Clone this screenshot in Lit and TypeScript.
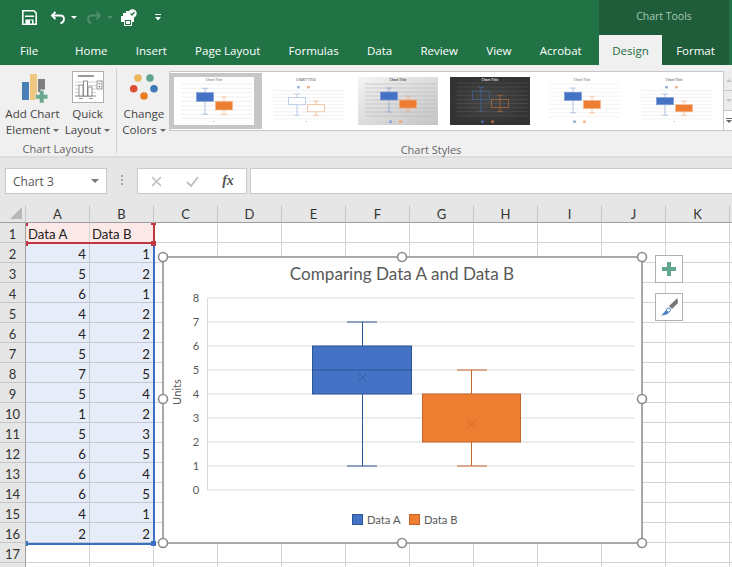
import { LitElement, html, css, svg } from "lit";
import { customElement } from "lit/decorators.js";

const tabs = ["Home", "Insert", "Page Layout", "Formulas", "Data", "Review", "View", "Acrobat"];
const cols = ["A", "B", "C", "D", "E", "F", "G", "H", "I", "J", "K"];
const dataA = [4, 5, 6, 4, 4, 5, 7, 5, 1, 5, 6, 6, 6, 4, 2];
const dataB = [1, 2, 1, 2, 2, 2, 5, 4, 2, 3, 5, 4, 5, 1, 2];

type Thumb = {
  bg: string; fillA: string; fillB: string; lineA: string; lineB: string; grid: string;
  title: string; titleColor: string; legend: "top" | "bottom" | "none"; top: number; st: number;
};

const thumbs: Thumb[] = [
  { bg: "#fff", fillA: "#4472c4", fillB: "#ed7d31", lineA: "#9db2dc", lineB: "#f3b88f", grid: "#e4e4e4", title: "Chart Title", titleColor: "#999", legend: "none", top: 7, st: 4.33 },
  { bg: "#fff", fillA: "#fff", fillB: "#fff", lineA: "#a9bce0", lineB: "#f0b48a", grid: "#e8e8e8", title: "CHART TITLE", titleColor: "#888", legend: "top", top: 13.5, st: 3.55 },
  { bg: "url(#g1)", fillA: "#4472c4", fillB: "#ed7d31", lineA: "#8ba3d2", lineB: "#efa877", grid: "#b8b8b8", title: "Chart Title", titleColor: "#555", legend: "bottom", top: 7, st: 4 },
  { bg: "url(#g2)", fillA: "none", fillB: "none", lineA: "#44679f", lineB: "#b06a3c", grid: "#565656", title: "Chart Title", titleColor: "#ddd", legend: "bottom", top: 6, st: 4.1 },
  { bg: "#fff", fillA: "#4472c4", fillB: "#ed7d31", lineA: "#9db2dc", lineB: "#f3b88f", grid: "#ececec", title: "Chart Title", titleColor: "#999", legend: "bottom", top: 7, st: 4.1 },
  { bg: "#fff", fillA: "#4472c4", fillB: "#ed7d31", lineA: "#9db2dc", lineB: "#f3b88f", grid: "#e8e8e8", title: "Chart Title", titleColor: "#888", legend: "top", top: 13.5, st: 3.55 },
];

function thumbSvg(t: Thumb) {
  const y = (v: number) => t.top + (8 - v) * t.st;
  const lines = [0, 1, 2, 3, 4, 5, 6, 7, 8];
  const legY = t.legend === "top" ? 9 : 43.5;
  return html`<svg class="thumb" viewBox="0 0 80 48" width="80" height="48">
    <defs>
      <linearGradient id="g1" x1="0" y1="0" x2="1" y2="1"><stop offset="0" stop-color="#f4f4f4"/><stop offset="1" stop-color="#c4c4c4"/></linearGradient>
      <radialGradient id="g2"><stop offset="0" stop-color="#474747"/><stop offset="1" stop-color="#333"/></radialGradient>
    </defs>
    <rect width="80" height="48" fill=${t.bg}/>
    <text x="40" y="4" class="tt" fill=${t.titleColor} text-anchor="middle">${t.title}</text>
    ${lines.map((v) => svg`<line x1="7" x2="78" y1=${y(v)} y2=${y(v)} stroke=${t.grid} stroke-width=".6"/>`)}
    ${t.legend !== "none" ? svg`<rect x="31" y=${legY} width="3" height="2.4" fill=${t.lineA}/><rect x="41" y=${legY} width="3" height="2.4" fill=${t.lineB}/>` : ""}
    ${t.legend !== "bottom" ? svg`<rect x="39.500" y="44" width="1" height="1" fill="#aaa"/>` : ""}
    <line x1="31" x2="31" y1=${y(7)} y2=${y(1)} stroke=${t.lineA} stroke-width=".8"/>
    <line x1="28" x2="34" y1=${y(7)} y2=${y(7)} stroke=${t.lineA} stroke-width=".7"/>
    <line x1="28" x2="34" y1=${y(1)} y2=${y(1)} stroke=${t.lineA} stroke-width=".7"/>
    <rect x="22.500" y=${y(6)} width="17" height=${t.st * 2} fill=${t.fillA} stroke=${t.fillA === "#4472c4" ? "#7f9bd2" : t.lineA} stroke-width=".7"/>
    <line x1="50" x2="50" y1=${y(5)} y2=${y(1)} stroke=${t.lineB} stroke-width=".8"/>
    <line x1="47" x2="53" y1=${y(5)} y2=${y(5)} stroke=${t.lineB} stroke-width=".7"/>
    <line x1="47" x2="53" y1=${y(1)} y2=${y(1)} stroke=${t.lineB} stroke-width=".7"/>
    <rect x="41.500" y=${y(4)} width="17" height=${t.st * 2} fill=${t.fillB} stroke=${t.lineB} stroke-width=".7"/>
  </svg>`;
}

@customElement("app-root")
export class AppRoot extends LitElement {
  static styles = css`
    :host { display: block; width: 732px; height: 567px; overflow: hidden; position: relative; background: #fff; font-family: "Open Sans", "Noto Sans", sans-serif; color: #444; }
    .titlebar { height: 35px; background: #217346; display: flex; align-items: center; justify-content: space-between; }
    .qat { display: flex; align-items: center; padding-left: 22px; }
    .qat svg { display: block; }
    .ctx { width: 130px; height: 35px; margin-right: 3px; background: #1e5c3a; color: #a9c9b6; font-size: 10.500px; display: flex; align-items: center; justify-content: center; padding-bottom: 3px; box-sizing: border-box; }
    .tabbar { height: 30px; background: #217346; display: flex; align-items: stretch; font-size: 11.500px; color: #fff; }
    .tab { display: flex; align-items: center; padding: 0 14.150px; white-space: nowrap; }
    .tab.file { box-sizing: border-box; width: 60.850px; padding: 0 0 0 20px; }
    .ctx-tabs { flex: none; margin-left: auto; margin-right: 3px; width: 130px; display: flex; background: #1e5c3a; }
    .ctx-tabs .tab { justify-content: center; padding: 0; }
    .design { width: 63px; background: #f0f0f0; color: #1e6b40; }
    .format { flex: 1; }
    .ribbon { height: 93px; background: #f0f0f0; border-bottom: 2px solid #dcdcdc; box-sizing: border-box; display: flex; position: relative; font-size: 11.600px; color: #444; }
    .grp { display: flex; flex-direction: column; box-sizing: border-box; }
    .grp.layouts { width: 117px; border-right: 1px solid #cfcfcf; margin: 4px 0 0; height: 84px; }
    .grp.colors { width: 54px; }
    .grp.styles { flex: 1; }
    .items { display: flex; flex: 1; }
    .big { display: flex; flex-direction: column; align-items: center; line-height: 16px; text-align: center; white-space: nowrap; }
    .big svg { display: block; }
    .add { width: 65px; margin-top: -1px; }
    .quick { width: 45px; margin-top: -1px; }
    .big .lbl { margin-top: 2px; }
    .changecolors { width: 54px; margin-top: 5px; }
    .changecolors .lbl { margin-top: 6px; }
    .quicksvg { margin: 3px 0 1px; }
    .car { display: inline-block; width: 0; height: 0; border-left: 3px solid transparent; border-right: 3px solid transparent; border-top: 3px solid #666; vertical-align: middle; margin-left: 3px; }
    .glabel { font-size: 11px; color: #666; text-align: center; height: 15px; line-height: 15px; }
    .layouts .glabel { margin-bottom: -3px; }
    .styles .glabel { margin-top: auto; margin-bottom: -1px; width: 520px; }
    .gallery { margin-top: 6px; height: 60px; width: 563px; margin-left: -2px; border: 1px solid #c6c6c6; border-width: 1px 0 1px 1px; background: #fff; display: flex; box-sizing: border-box; align-items: center; position: relative; }
    .sel { background: #c6c6c6; padding: 4px; height: 56px; width: 92px; box-sizing: border-box; flex: none; }
    .gthumb { flex: none; margin-left: 12px; height: 48px; }
    .sel + .gthumb { margin-left: 4px; }
    .thumb { display: block; }
    .tt { font-family: "Open Sans", sans-serif; font-size: 3.200px; font-weight: 700; }
    .scroll { position: absolute; left: 553px; top: -1px; width: 9px; height: 60px; display: flex; flex-direction: column; border-left: 1px solid #c6c6c6; background: #ececec; }
    .scroll div { flex: 1; border-bottom: 1px solid #c6c6c6; position: relative; display: flex; align-items: center; justify-content: center; }
    .scroll div:last-child { background: #fff; }
    .up { width: 0; height: 0; border-left: 3px solid transparent; border-right: 3px solid transparent; border-bottom: 3px solid #c4c4c4; }
    .dn { width: 0; height: 0; border-left: 3px solid transparent; border-right: 3px solid transparent; border-top: 3px solid #c4c4c4; }
    .more { width: 6px; border-top: 1px solid #666; display: flex; justify-content: center; padding-top: 1px; }
    .more span { width: 0; height: 0; border-left: 3px solid transparent; border-right: 3px solid transparent; border-top: 3px solid #666; }
    .fbar { height: 47px; background: #e6e6e6; box-sizing: border-box; padding: 10px 0 0 5px; display: flex; align-items: flex-start; }
    .namebox { width: 102px; height: 26px; background: #fff; border: 1px solid #c9c9c9; box-sizing: border-box; display: flex; align-items: center; justify-content: space-between; padding: 0 7px; font-size: 12px; color: #555; }
    .namebox .arrow { width: 0; height: 0; border-left: 4px solid transparent; border-right: 4px solid transparent; border-top: 4px solid #777; }
    .dots { width: 30px; display: flex; flex-direction: column; align-items: center; gap: 2px; padding-top: 7px; box-sizing: border-box; height: 26px; }
    .dots i { display: block; width: 2px; height: 2px; background: #aaa; }
    .fnbtns { width: 110px; height: 26px; background: #fff; border: 1px solid #c9c9c9; box-sizing: border-box; display: flex; align-items: center; }
    .fnbtns span { width: 36px; display: flex; justify-content: center; align-items: center; }
    .fnbtns .fx { color: #555; font-family: "Liberation Serif", serif; font-style: italic; font-size: 14px; font-weight: 700; }
    .fbox { flex: 1; height: 26px; margin-left: 3px; background: #fff; border: 1px solid #c9c9c9; border-right: 0; box-sizing: border-box; }
    .sheet { display: grid; grid-template-columns: 26px repeat(11, 64px) 66px; grid-template-rows: 18px; grid-auto-rows: 20px; font-family: Lato, "Liberation Sans", sans-serif; font-size: 13.200px; color: #222; }
    .hd { background: #e6e6e6; border-right: 1px solid #c6c6c6; border-bottom: 1px solid #9e9e9e; box-sizing: border-box; display: flex; align-items: center; justify-content: center; color: #333; font-size: 13px; }
    .corner { position: relative; }
    .corner::after { content: ""; position: absolute; right: 3px; bottom: 3px; border-style: solid; border-width: 0 0 12px 12px; border-color: transparent transparent #b8b8b8 transparent; }
    .rh { background: #e6e6e6; border-right: 1px solid #9e9e9e; border-bottom: 1px solid #c6c6c6; box-sizing: border-box; display: flex; align-items: center; justify-content: center; color: #333; font-size: 13px; padding-top: 2px; }
    .c { border-right: 1px solid #d4d4d4; border-bottom: 1px solid #d4d4d4; box-sizing: border-box; display: flex; align-items: center; padding: 2px 2px 0; }
    .num { justify-content: flex-end; padding-right: 3px; }
    .red { background: #fbe9e7; }
    .blue { background: #e6edf8; border-color: #c2c8d2; }
    .frame-red, .frame-blue { position: absolute; box-sizing: border-box; pointer-events: none; }
    .frame-red { left: 26px; top: 223px; width: 129px; height: 21px; border-right: 2px solid #c0353f; border-bottom: 2px solid #c0353f; }
    .frame-blue { left: 26px; top: 244px; width: 129px; height: 301px; border-right: 2px solid #3a6fc4; border-bottom: 2px solid #3a6fc4; }
    .hnd { position: absolute; width: 5px; height: 5px; }
    .hr { background: #c0353f; }
    .hb { background: #3a6fc4; }
    .h1 { left: 26px; top: 223px; width: 2px; height: 3px; }
    .h2 { left: 26px; top: 241px; width: 2px; height: 5px; }
    .h3 { left: 151px; top: 223px; height: 2px; }
    .h4 { left: 151px; top: 241px; }
    .h5 { left: 26px; top: 541px; width: 2px; }
    .h6 { left: 151px; top: 541px; }
    .chart { position: absolute; left: 162px; top: 256px; width: 481px; height: 288px; }
    .chart svg { display: block; overflow: visible; font-family: Lato, "Liberation Sans", sans-serif; }
    .ctitle { font-size: 17.100px; fill: #595959; }
    .axis { font-size: 11.200px; fill: #595959; }
    .btn { position: absolute; left: 655px; width: 28px; height: 28px; background: #fff; border: 1px solid #b0b0b0; box-sizing: border-box; display: flex; align-items: center; justify-content: center; }
    .b1 { top: 255px; }
    .b2 { top: 293px; }
  `;

  render() {
    const X = (v: number) => 490 - 256 - v * 24;
    const circles = [[1, 1], [240, 1], [480, 1], [1, 143], [480, 143], [1, 287], [240, 287], [480, 287]];
    return html`
      <div class="titlebar">
        <div class="qat">
          <svg width="15" height="15" viewBox="0 0 15 15" style="margin-right:13px"><path d="M.8.8h11.200l2.200 2.200v11.200H.8z" fill="none" stroke="#fff" stroke-width="1.600"/><rect x="3" y="5.500" width="9" height="1.500" fill="#fff"/><rect x="3.500" y="9.500" width="8" height="5" fill="#fff"/><rect x="8" y="10.500" width="2" height="3" fill="#217346"/></svg>
          <svg width="16" height="14" viewBox="0 0 16 14"><path d="M5.500 1 2 4.500 5.500 8" fill="none" stroke="#fff" stroke-width="1.800"/><path d="M2.500 4.500H10c3 0 4 2 4 3.500s-1 3.500-3.500 4.500" fill="none" stroke="#fff" stroke-width="1.800"/></svg>
          <svg width="6" height="4" viewBox="0 0 6 4" style="margin:0 9px 0 5px"><path d="M0 0h6L3 3z" fill="#fff"/></svg>
          <svg width="16" height="14" viewBox="0 0 16 14"><path d="M10.500 1 14 4.500 10.500 8" fill="none" stroke="#4f8f6b" stroke-width="1.800"/><path d="M13.500 4.500H6C3 4.500 2 6.500 2 8s1 3.500 3.500 4.500" fill="none" stroke="#4f8f6b" stroke-width="1.800"/></svg>
          <svg width="6" height="4" viewBox="0 0 6 4" style="margin:0 7px 0 5px"><path d="M0 0h6L3 3z" fill="#4f8f6b"/></svg>
          <svg width="18" height="18" viewBox="0 0 18 18" style="margin-right:17px"><path d="M3 4h3V2h3v2h1v3H3zM1 7h13v6h-2v4H4v-4H1z" fill="#fff"/><rect x="5" y="11" width="6" height="5" fill="#217346"/><rect x="6" y="12" width="4" height="3" fill="#fff"/><circle cx="12.500" cy="4.500" r="4.200" fill="#fff"/><path d="M10.500 4.500l1.500 1.500 2.500-3" fill="none" stroke="#217346" stroke-width="1.200"/></svg>
          <svg width="6" height="7" viewBox="0 0 6 7"><rect y="0" width="6" height="1" fill="#fff"/><path d="M0 3h6L3 6.500z" fill="#fff"/></svg>
        </div>
        <div class="ctx">Chart Tools</div>
      </div>
      <div class="tabbar">
        <div class="tab file">File</div>
        ${tabs.map((t) => html`<div class="tab">${t}</div>`)}
        <div class="ctx-tabs"><div class="tab design">Design</div><div class="tab format">Format</div></div>
      </div>
      <div class="ribbon">
        <div class="grp layouts">
          <div class="items">
            <div class="big add">
              <svg width="34" height="36" viewBox="0 0 34 36">
                <rect x="6" y="14" width="7" height="18" fill="#4a7fb5"/>
                <rect x="14" y="6" width="7" height="26" fill="#f0c77e"/>
                <rect x="22" y="11" width="7" height="13" fill="#7f7f7f"/>
                <path d="M25.200 21.500h5v5h5.500v5h-5.500v5h-5v-5h-5.500v-5h5.500z" fill="#f0f0f0" transform="translate(-.7 0)"/>
                <path d="M25.700 22.700h4v4h3.800v4h-3.800v4h-4v-4h-4v-4h4z" fill="#6aa890" transform="translate(-2 0)"/>
              </svg>
              <div class="lbl">Add Chart<br/>Element<span class="car"></span></div>
            </div>
            <div class="big quick">
              <svg class="quicksvg" width="32" height="32" viewBox="0 0 32 32"><rect x=".5" y=".5" width="31" height="31" fill="#fff" stroke="#b0b0b0"/><rect x="6" y="4" width="16" height="2" fill="#999"/><path d="M3 11h21M3 14.500h21M3 18h21M3 21.500h21" stroke="#c4c4c4" stroke-width=".8"/><path d="M3 25h21" stroke="#888"/><rect x="7" y="14" width="4" height="11" fill="#fff" stroke="#777" stroke-width=".8"/><rect x="11.500" y="10" width="4" height="15" fill="#fff" stroke="#777" stroke-width=".8"/><rect x="16" y="16" width="4" height="9" fill="#fff" stroke="#777" stroke-width=".8"/><rect x="25" y="10" width="5" height="8" fill="#fff" stroke="#777" stroke-width=".8"/><rect x="26.800" y="12" width="1.400" height="1.400" fill="#777"/><rect x="26.800" y="15" width="1.400" height="1.400" fill="#777"/><rect x="7" y="27" width="4" height="1" fill="#999"/><rect x="17" y="27" width="4" height="1" fill="#999"/></svg>
              <div class="lbl">Quick<br/>Layout<span class="car"></span></div>
            </div>
          </div>
          <div class="glabel">Chart Layouts</div>
        </div>
        <div class="grp colors">
          <div class="items">
            <div class="big changecolors">
              <svg width="30" height="30" viewBox="0 0 30 30"><circle cx="9" cy="8" r="3.800" fill="#edb65b"/><circle cx="21" cy="8" r="3.800" fill="#5fa68c"/><circle cx="4.700" cy="18.700" r="3.800" fill="#dd4f31"/><circle cx="25" cy="18.700" r="3.800" fill="#3f78b5"/><circle cx="15" cy="26" r="3.800" fill="#ea7d21"/></svg>
              <div class="lbl">Change<br/>Colors<span class="car"></span></div>
            </div>
          </div>
        </div>
        <div class="grp styles">
          <div class="gallery">
            <div class="sel">${thumbSvg(thumbs[0])}</div>
            ${thumbs.slice(1).map((t) => html`<div class="gthumb">${thumbSvg(t)}</div>`)}
            <div class="scroll"><div><span class="up"></span></div><div><span class="dn"></span></div><div><span class="more"><span></span></span></div></div>
          </div>
          <div class="glabel">Chart Styles</div>
        </div>
      </div>
      <div class="fbar">
        <div class="namebox"><span>Chart 3</span><span class="arrow"></span></div>
        <div class="dots"><i></i><i></i><i></i></div>
        <div class="fnbtns">
          <span><svg width="11" height="11" viewBox="0 0 11 11"><path d="M1 1l9 9M10 1l-9 9" stroke="#bdbdbd" stroke-width="1.500"/></svg></span>
          <span><svg width="13" height="11" viewBox="0 0 13 11"><path d="M1 6l4 4 7-9" fill="none" stroke="#bdbdbd" stroke-width="1.800"/></svg></span>
          <span class="fx">fx</span>
        </div>
        <div class="fbox"></div>
      </div>
      <div class="sheet">
        <div class="hd corner"></div>
        ${cols.map((c) => html`<div class="hd">${c}</div>`)}
        <div class="hd"></div>
        ${Array.from({ length: 18 }, (_, i) => {
          const r = i + 1;
          const isHead = r === 1;
          const isData = r >= 2 && r <= 16;
          return html`<div class="rh">${r <= 17 ? r : ""}</div>
            ${cols.concat("L").map((_c, ci) => {
              if (ci < 2 && isHead) return html`<div class="c red">${ci === 0 ? "Data A" : "Data B"}</div>`;
              if (ci < 2 && isData) return html`<div class="c num blue">${(ci === 0 ? dataA : dataB)[i - 1]}</div>`;
              return html`<div class="c"></div>`;
            })}`;
        })}
      </div>
      <div class="frame-red"></div>
      <div class="frame-blue"></div>
      <div class="hnd hr h1"></div>
      <div class="hnd hr h2"></div>
      <div class="hnd hr h3"></div>
      <div class="hnd hr h4"></div>
      <div class="hnd hb h5"></div>
      <div class="hnd hb h6"></div>

      <div class="chart">
        <svg width="481" height="288" viewBox="0 0 481 288">
          <rect x="1" y="1" width="479" height="286" fill="#fff" stroke="#8c8c8c" stroke-width="1.500"/>
          <text x="240" y="24" text-anchor="middle" class="ctitle">Comparing Data A and Data B</text>
          <text transform="translate(19 136) rotate(-90)" text-anchor="middle" class="axis">Units</text>
          <line x1="45.500" x2="45.500" y1=${X(8)} y2=${X(0)} stroke="#d9d9d9"/>
          ${[0, 1, 2, 3, 4, 5, 6, 7, 8].map((v) => svg`
            <line x1="45.500" x2="472" y1=${X(v)} y2=${X(v)} stroke="#d9d9d9"/>
            <text x="34" y=${X(v) + 4} text-anchor="middle" class="axis">${v}</text>`)}
          <g stroke="#2f5597" fill="none">
            <line x1="200.500" x2="200.500" y1=${X(7)} y2=${X(1)}/>
            <line x1="185" x2="215" y1=${X(7)} y2=${X(7)}/>
            <line x1="185" x2="215" y1=${X(1)} y2=${X(1)}/>
            <rect x="150.500" y=${X(6)} width="99" height="48" fill="#4472c4"/>
            <line x1="150.500" x2="249.500" y1=${X(5)} y2=${X(5)}/>
            <path d="M196.500 117.500l8 8M204.500 117.500l-8 8" stroke-width=".8"/>
          </g>
          <g stroke="#c5642a" fill="none">
            <line x1="309.500" x2="309.500" y1=${X(5)} y2=${X(1)}/>
            <line x1="295" x2="325" y1=${X(5)} y2=${X(5)}/>
            <line x1="295" x2="325" y1=${X(1)} y2=${X(1)}/>
            <rect x="260.500" y=${X(4)} width="98" height="48" fill="#ed7d31"/>
            <path d="M305.500 164.500l8 8M313.500 164.500l-8 8" stroke-width=".8"/>
          </g>
          <rect x="190.500" y="258.500" width="10" height="10" fill="#4472c4" stroke="#2f5597"/>
          <text x="205" y="267.500" class="axis">Data A</text>
          <rect x="247.500" y="258.500" width="10" height="10" fill="#ed7d31" stroke="#c5642a"/>
          <text x="262" y="267.500" class="axis">Data B</text>
          ${circles.map(([x, y]) => svg`<circle cx=${x} cy=${y} r="4.500" fill="#fff" stroke="#8c8c8c" stroke-width="1.600"/>`)}
        </svg>
      </div>
      <div class="btn b1">
        <svg width="14" height="14" viewBox="0 0 14 14"><path d="M5 0h4v5h5v4H9v5H5V9H0V5h5z" fill="#5fa68c"/></svg>
      </div>
      <div class="btn b2">
        <svg width="20" height="20" viewBox="0 0 20 20"><path d="M18.500 1 19 6l-6 6-3-3z" fill="#777"/><path d="M1 18.500C4 18 5 15 7 13l3 2.500C9 17.500 6 18.500 1 18.500z" fill="#4a86c0"/><circle cx="9.500" cy="13" r="2" fill="#fff" stroke="#4a86c0"/></svg>
      </div>
    `;
  }
}
